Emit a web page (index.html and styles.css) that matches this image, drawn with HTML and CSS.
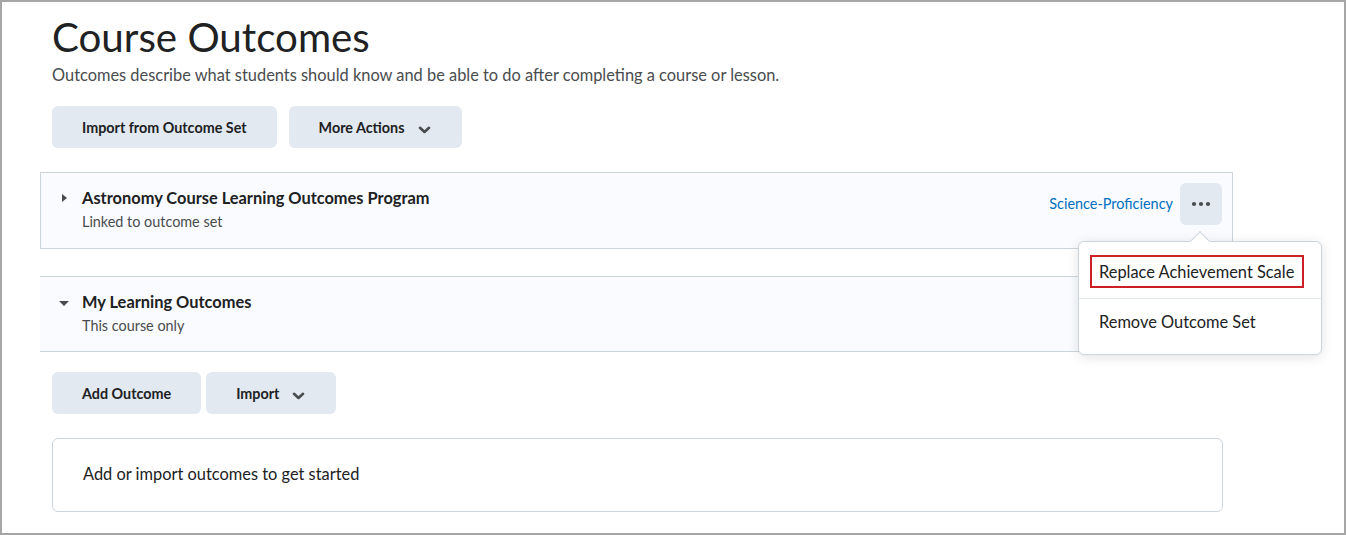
FILE: index.html
```html
<!DOCTYPE html>
<html lang="en">
<head>
<meta charset="utf-8">
<title>Course Outcomes</title>
<link rel="stylesheet" href="styles.css">
</head>
<body>
<div class="frame">
  <h1 class="title">Course Outcomes</h1>
  <p class="desc">Outcomes describe what students should know and be able to do after completing a course or lesson.</p>
  <div class="btn-row top-btns">
    <button class="btn">Import from Outcome Set</button>
    <button class="btn btn-drop">More Actions <svg class="chev" width="13" height="8" viewBox="0 0 13 8"><path d="M2 1.8 L6.5 6 L11 1.8" fill="none" stroke="#494c4e" stroke-width="2.6" stroke-linecap="round" stroke-linejoin="round"/></svg></button>
  </div>

  <div class="set set-linked">
    <div class="toggle"><span class="tri-right"></span></div>
    <div class="set-main">
      <div class="set-title">Astronomy Course Learning Outcomes Program</div>
      <div class="set-sub">Linked to outcome set</div>
    </div>
    <div class="set-actions">
      <a class="scale-link" href="#">Science-Proficiency</a>
      <div class="more-wrap">
        <button class="more-btn" aria-label="More options"><svg width="20" height="6" viewBox="0 0 20 6"><circle cx="3" cy="3" r="2.1" fill="#494c4e"/><circle cx="10" cy="3" r="2.1" fill="#494c4e"/><circle cx="17" cy="3" r="2.1" fill="#494c4e"/></svg></button>
        <div class="menu">
          <span class="pointer"></span>
          <div class="menu-item first"><span class="focus-box">Replace Achievement Scale</span></div>
          <div class="menu-sep"></div>
          <div class="menu-item second">Remove Outcome Set</div>
        </div>
      </div>
    </div>
  </div>

  <div class="set set-local">
    <div class="toggle"><span class="tri-down"></span></div>
    <div class="set-main">
      <div class="set-title">My Learning Outcomes</div>
      <div class="set-sub">This course only</div>
    </div>
  </div>

  <div class="btn-row bottom-btns">
    <button class="btn btn-add">Add Outcome</button>
    <button class="btn btn-drop">Import <svg class="chev" width="13" height="8" viewBox="0 0 13 8"><path d="M2 1.8 L6.5 6 L11 1.8" fill="none" stroke="#494c4e" stroke-width="2.6" stroke-linecap="round" stroke-linejoin="round"/></svg></button>
  </div>

  <div class="empty">Add or import outcomes to get started</div>
</div>
</body>
</html>
```

FILE: styles.css
```css
* { box-sizing: border-box; }
html, body { margin: 0; padding: 0; background: #fff; }
body { font-family: Lato, "Noto Sans", "Liberation Sans", sans-serif; color: #202122; }

.frame {
  width: 1346px;
  height: 535px;
  border: 2px solid #a6a6a6;
  padding: 0 122px 0 50px;
  overflow: hidden;
}

.title {
  margin: 9px 0 0;
  font-size: 40.3px;
  line-height: 52px;
  font-weight: 400;
  color: #202122;
}

.desc {
  margin: 0;
  font-size: 16.4px;
  line-height: 24px;
  color: #494c4e;
}

.btn-row { display: flex; }
.top-btns { margin-top: 19px; gap: 12px; }
.bottom-btns { margin-top: 20px; gap: 5px; }

.btn {
  height: 42px;
  border: 0;
  border-radius: 6px;
  background: #e3e9f1;
  font-family: inherit;
  font-size: 14.35px;
  font-weight: 700;
  color: #202122;
  padding: 0 30px;
  display: inline-flex;
  align-items: center;
}
.btn-drop { padding-right: 31px; }
.btn .chev { margin-left: 13px; margin-top: 5px; }

.set {
  display: flex;
  align-items: flex-start;
  background: #f9fbff;
  margin: 0 -11px 0 -12px;
  padding: 13px 10px 16px 18px;
}
.set-linked {
  margin-top: 24px;
  border: 1px solid #cdd5dc;
}
.set-local {
  margin-top: 27px;
  border-top: 1px solid #cdd5dc;
  border-bottom: 1px solid #cdd5dc;
  padding-left: 19px;
  padding-bottom: 15px;
}

.toggle {
  width: 10px;
  height: 24px;
  display: flex;
  align-items: center;
  justify-content: center;
  margin-right: 13px;
}
.tri-right {
  width: 0; height: 0;
  border-top: 4.5px solid transparent;
  border-bottom: 4.5px solid transparent;
  border-left: 5.5px solid #494c4e;
}
.tri-down {
  width: 0; height: 0;
  border-left: 5px solid transparent;
  border-right: 5px solid transparent;
  border-top: 5.5px solid #494c4e;
  margin-top: 2px;
}

.set-main { flex: 1; }
.set-title {
  font-size: 16.4px;
  line-height: 24px;
  font-weight: 700;
  color: #202122;
}
.set-sub {
  margin-top: 2px;
  font-size: 14.4px;
  line-height: 20px;
  color: #494c4e;
}

.set-actions {
  display: flex;
  align-items: center;
  gap: 7px;
  margin-top: -3px;
}
.scale-link {
  font-size: 14.45px;
  line-height: 20px;
  color: #006fbf;
  text-decoration: none;
}
.more-wrap { position: relative; }
.more-btn {
  width: 42px;
  height: 42px;
  border: 0;
  border-radius: 6px;
  background: #e3e9f1;
  display: flex;
  align-items: center;
  justify-content: center;
  padding: 0;
}

.menu {
  position: absolute;
  left: -102px;
  top: 58px;
  width: 244px;
  background: #fff;
  border: 1px solid #cdd5dc;
  border-radius: 6px;
  box-shadow: 0 2px 12px rgba(0, 0, 0, 0.12);
  z-index: 5;
}
.pointer {
  position: absolute;
  left: 114px;
  top: -8px;
  width: 14px;
  height: 14px;
  background: #fff;
  border-top: 1px solid #cdd5dc;
  border-left: 1px solid #cdd5dc;
  transform: rotate(45deg);
}
.menu-item {
  position: relative;
  font-size: 16.4px;
  line-height: 24px;
  color: #202122;
}
.menu-item.first { padding: 13px 17px 10px 11px; }
.focus-box {
  display: block;
  border: 2px solid #cd2026;
  padding: 3px 6px 2px 7px;
  white-space: nowrap;
}
.menu-sep { height: 1px; background: #e3e9f1; }
.menu-item.second { padding: 11px 20px 20px 20px; }

.empty {
  margin-top: 24px;
  width: 1171px;
  border: 1px solid #cdd5dc;
  border-radius: 6px;
  padding: 23px 30px 25px 30px;
  font-size: 16.4px;
  line-height: 24px;
  color: #202122;
}
```
